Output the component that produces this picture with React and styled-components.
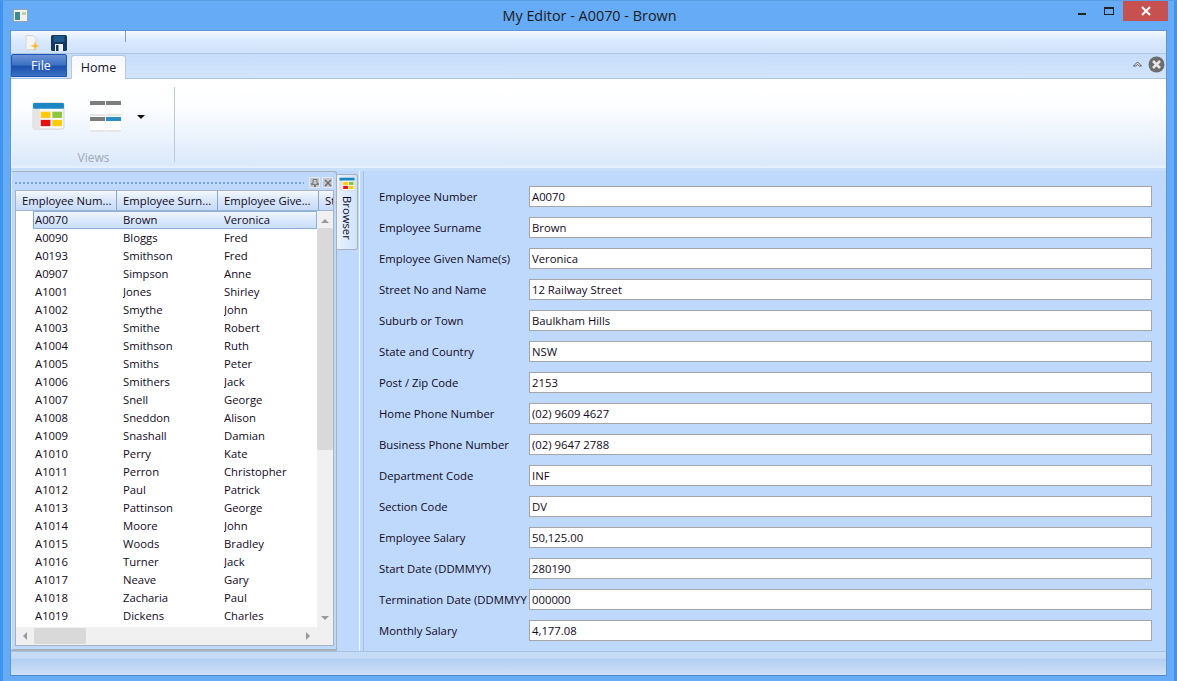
import React from 'react';
import styled, { createGlobalStyle } from 'styled-components';

const Global = createGlobalStyle`
  html, body { margin: 0; padding: 0; width: 1177px; height: 681px; overflow: hidden; background: #66abf6; }
  * { box-sizing: border-box; }
`;
const Frame = styled.div`
  width: 1177px; height: 681px; display: flex; flex-direction: column;
  background: #66abf6; border-left: 3px solid #3f94f0; border-right: 3px solid #3f94f0; border-top: 1px solid #5a9fe6;
  font-family: "Open Sans", "Noto Sans", sans-serif; font-size: 11.3px; color: #12091c;
`;
const TitleBar = styled.div`
  height: 29px; flex: none; display: flex; align-items: center; justify-content: space-between; position: relative; padding-left: 10px;
`;
const Title = styled.div`
  position: absolute; left: 0; right: 0; top: 6px; text-align: center; font-size: 14.4px; line-height: 18px; color: #1b1b1b; padding-left: 2px;
`;
const WinIcon = styled.svg`width: 15px; height: 13px; display: block; margin-top: -1px;`;
const WinButtons = styled.div`display: flex; align-items: flex-start; align-self: flex-start; position: relative; margin-right: 6px;`;
const WinBtn = styled.div`
  width: ${p => p.$w}px; height: 20px; display: flex; align-items: center; justify-content: center;
  background: ${p => p.$close ? '#c75050' : 'transparent'};
`;
const Client = styled.div`
  margin: 0 7px 0 7px; height: 646px; flex: none; border: 1px solid #5f97d6; border-bottom-color: #4f88c8;
  display: flex; flex-direction: column; background: #bed9fb;
`;
const Qat = styled.div`
  height: 23px; flex: none; display: flex; align-items: flex-start; padding-left: 13px; gap: 11px;
  background: linear-gradient(#f5f9ff, #d9e9fd 45%, #cfe2fb);
  border-bottom: 1px solid #aec6e2; position: relative;
`;
const QatIcon = styled.svg`width: 16px; height: 16px; margin-top: 4px; display: block;`;
const QatEnd = styled.div`position: absolute; left: 114px; top: 0; width: 1px; height: 11px; background: #8e9aa8;`;
const TabRow = styled.div`
  height: 25px; flex: none; display: flex; align-items: flex-end; position: relative;
  background: linear-gradient(#c6ddfb, #d3e5fc);
  border-bottom: 1px solid #a9c3e2;
`;
const FileTab = styled.div`
  width: 56px; height: 23px; align-self: flex-start; padding-left: 4px; border: 1px solid #1d57b1; border-radius: 2px 2px 0 0;
  background: linear-gradient(#6b93d6, #3f72c4 45%, #1c52ac 55%, #3b6fc5);
  color: #fff; text-align: center; line-height: 22px; font-size: 12.5px;
`;
const HomeTab = styled.div`
  width: 55px; height: 24px; margin-left: 4px; margin-bottom: -1px; background: linear-gradient(#f4f8fe, #fff); border: 1px solid #b3c9e4; border-bottom: none; border-radius: 3px 3px 0 0;
  text-align: center; line-height: 24px; font-size: 12.5px; color: #1a0f26;
`;
const TabTools = styled.div`
  position: absolute; right: 1px; top: 2px; display: flex; align-items: center; gap: 5px;
`;
const Chevron = styled.svg`width: 11px; height: 8px; display: block; margin-top: -2px;`;
const Ribbon = styled.div`
  height: 89px; flex: none; display: flex; background: linear-gradient(#fff, #fdfeff 30%, #dbe9fb 96%, #e9f2fe);
  border-left: 1px solid #eaf3ff;
`;
const Group = styled.div`
  width: 163px; margin-top: 8px; margin-bottom: 6px; border-right: 1px solid #b9cbe0; display: flex; flex-direction: column; align-items: center;
`;
const GroupIcons = styled.div`
  display: flex; align-items: flex-start; width: 100%; padding: 15px 0 0 20px; flex: 1;
`;
const BigIcon = styled.svg`width: 33px; height: 28px; display: block;`;
const SmallGrid = styled.svg`width: 32px; height: 31px; display: block; margin: -1px 0 0 25px;`;
const Drop = styled.div`
  width: 0; height: 0; border: 4px solid transparent; border-top: 4px solid #111; border-bottom: none; margin: 13px 0 0 15px;
`;
const GroupLabel = styled.div`color: #a2a9b3; font-size: 12px; line-height: 14px; height: 15px; margin: 0 0 -4px 1px;`;
const Strip = styled.div`height: 3px; flex: none; background: #c8dffb;`;
const Main = styled.div`flex: 1; min-height: 0; display: flex; background: #bed9fb;`;
const Pane = styled.div`
  width: 326px; flex: none; height: 480px; border: 1px solid #a8b0ba; border-radius: 3px 3px 0 0; border-bottom-width: 2px; padding: 0 2px 3px 3px; display: flex; flex-direction: column;
  background: #bed9fb; border-left: 1px solid #e4eefb;
`;
const PaneHead = styled.div`height: 18px; flex: none; display: flex; align-items: center; gap: 2px; padding: 3px 1px 0 0;`;
const Grip = styled.div`
  flex: 1; height: 2px; margin: 0 3px 0 0; background-image: repeating-linear-gradient(90deg, #7aa3dc 0 2px, transparent 2px 4px);
`;
const PaneBtn = styled.div`
  width: 11px; height: 11px; border: 1px solid #e2e8f0; background: #c3c7cc; display: flex; align-items: center; justify-content: center;
`;
const DataGrid = styled.div`
  flex: 1; min-height: 0; background: #fff; border: 1px solid #aab2bd; display: flex; flex-direction: column; position: relative;
`;
const HeaderRow = styled.div`
  height: 20px; flex: none; display: flex; overflow: hidden; background: linear-gradient(#f4f8fe, #d8e6f8 50%, #c6dafa); border-bottom: 1px solid #9fb5cf;
`;
const HeaderCell = styled.div`
  flex: none; width: ${p => p.$w}px; padding-left: 6px; line-height: 19px; white-space: nowrap; overflow: hidden; border-right: 1px solid #8ca5c4;
  ${p => p.$last && 'border-right: none;'}
`;
const GridMid = styled.div`flex: 1; min-height: 0; display: flex;`;
const Rows = styled.div`flex: 1; min-width: 0; overflow: hidden;`;
const Row = styled.div`
  height: 18px; display: flex; margin-left: 17px; line-height: 17px;
  ${p => p.$sel && `line-height: 15px; background: linear-gradient(#eef5fe, #dbe9fc 50%, #c9ddfa); border: 1px solid #8fb0da; border-left-color:#7d9fcc; border-radius: 1px;`}
`;
const Cell = styled.div`
  flex: none; width: ${p => p.$w}px; padding-left: ${p => p.$p || 0}px; white-space: nowrap; overflow: hidden;
`;
const VScroll = styled.div`
  width: 16px; flex: none; background: #f0f0f0; display: flex; flex-direction: column; align-items: center; justify-content: space-between;
`;
const VThumb = styled.div`width: 16px; height: 222px; background: #d9d9d9; border-radius: 2px; margin-top: 17px;`;
const ArrowBox = styled.div`width: 16px; height: 17px; display: flex; align-items: center; justify-content: center; position: absolute; ${p => p.$top ? 'top: 21px;' : 'bottom: 19px;'} right: 0;`;
const TriUp = styled.div`width: 0; height: 0; border-left: 4px solid transparent; border-right: 4px solid transparent; border-bottom: 4px solid #9a9a9a;`;
const TriDown = styled.div`width: 0; height: 0; border-left: 4px solid transparent; border-right: 4px solid transparent; border-top: 4px solid #9a9a9a;`;
const HScroll = styled.div`
  height: 18px; flex: none; background: #f0f0f0; display: flex; align-items: center; position: relative;
`;
const HArrow = styled.div`width: 17px; display: flex; justify-content: center; flex: none;`;
const TriLeft = styled.div`width: 0; height: 0; border-top: 4px solid transparent; border-bottom: 4px solid transparent; border-right: 4px solid #9a9a9a;`;
const TriRight = styled.div`width: 0; height: 0; border-top: 4px solid transparent; border-bottom: 4px solid transparent; border-left: 4px solid #9a9a9a;`;
const HThumb = styled.div`width: 52px; height: 16px; background: #d9d9d9; border-radius: 2px; margin-left: 1px;`;
const HTrack = styled.div`flex: 1; display: flex; align-items: center;`;
const Corner = styled.div`width: 17px; flex: none; height: 18px; background: #f0f0f0;`;
const SideTabs = styled.div`width: 21px; flex: none; padding-top: 3px;`;
const SideTab = styled.div`
  width: 21px; height: 76px; background: linear-gradient(90deg, #eaf3fe, #cfe2fb); border: 1px solid #a8b0ba; border-left: none; border-radius: 0 3px 3px 0; display: flex; flex-direction: column; align-items: center; padding-top: 2px;
`;
const SideIcon = styled.svg`width: 16px; height: 14px; display: block;`;
const SideLabel = styled.div`writing-mode: vertical-rl; font-size: 11.3px; line-height: 16px; margin-top: 5px;`;
const Splitter = styled.div`
  width: 5px; flex: none; margin-left: 1px; border-left: 1px solid #f5f9ff; border-right: 1px solid #a6c1e4;
`;
const Form = styled.div`
  flex: 1; display: flex; flex-direction: column; padding: 15px 14px 0 15px; gap: 10px;
`;
const FormRow = styled.div`display: flex; align-items: center; height: 21px;`;
const Label = styled.div`width: 150px; flex: none; white-space: nowrap; overflow: visible;`;
const Value = styled.div`
  flex: 1; height: 21px; background: #fff; border: 1px solid #a5a5a5; line-height: 19px; padding-left: 2px;
`;
const Status = styled.div`
  height: 24px; flex: none; background: linear-gradient(#c6dcf6 0, #c6dcf6 25%, #b4cff1 32%, #cee0f8);
  border-top: 1px solid #a9c3e2;
`;

const fields = [
  ['Employee Number', 'A0070'], ['Employee Surname', 'Brown'], ['Employee Given Name(s)', 'Veronica'],
  ['Street No and Name', '12 Railway Street'], ['Suburb or Town', 'Baulkham Hills'], ['State and Country', 'NSW'],
  ['Post / Zip Code', '2153'], ['Home Phone Number', '(02) 9609 4627'], ['Business Phone Number', '(02) 9647 2788'],
  ['Department Code', 'INF'], ['Section Code', 'DV'], ['Employee Salary', '50,125.00'],
  ['Start Date (DDMMYY)', '280190'], ['Termination Date (DDMMYY', '000000'], ['Monthly Salary', '4,177.08'],
];
const rows = [
  ['A0070','Brown','Veronica'],['A0090','Bloggs','Fred'],['A0193','Smithson','Fred'],['A0907','Simpson','Anne'],
  ['A1001','Jones','Shirley'],['A1002','Smythe','John'],['A1003','Smithe','Robert'],['A1004','Smithson','Ruth'],
  ['A1005','Smiths','Peter'],['A1006','Smithers','Jack'],['A1007','Snell','George'],['A1008','Sneddon','Alison'],
  ['A1009','Snashall','Damian'],['A1010','Perry','Kate'],['A1011','Perron','Christopher'],['A1012','Paul','Patrick'],
  ['A1013','Pattinson','George'],['A1014','Moore','John'],['A1015','Woods','Bradley'],['A1016','Turner','Jack'],
  ['A1017','Neave','Gary'],['A1018','Zacharia','Paul'],['A1019','Dickens','Charles'],
];

const Dashboard = () => (
  <>
    <rect x="1" y="1" width="32" height="27" rx="2" fill="#fafafa" stroke="#cfcfcf" />
    <rect x="1" y="6" width="7" height="22" fill="#e4e4e4" />
    <rect x="1" y="1" width="32" height="6" rx="1" fill="#1b86c4" />
    <rect x="9" y="10" width="10" height="6.5" fill="#ffc90e" />
    <rect x="21" y="10" width="10" height="6.5" fill="#8cc63f" />
    <rect x="9" y="18.5" width="10" height="6.5" fill="#e8100f" />
    <rect x="21" y="18.5" width="10" height="6.5" fill="#ffc90e" />
  </>
);

const MiniPanel = ({ x, y, c }) => (
  <>
    <rect x={x} y={y} width="15" height="15" fill="#fdfdfd" />
    <rect x={x} y={y + 13} width="15" height="2" fill="#e6e6e6" />
    <rect x={x} y={y} width="15" height="4" fill={c} />
  </>
);

export default function App() {
  return (
    <Frame>
      <Global />
      <TitleBar>
        <WinIcon viewBox="0 0 15 13">
          <rect x="0.5" y="0.5" width="14" height="12" fill="#eef1f0" stroke="#9aa4ad" />
          <rect x="2" y="3" width="5" height="8" fill="#3d8a86" />
          <rect x="9" y="3" width="4" height="3" fill="#b8d4a8" />
        </WinIcon>
        <Title>My Editor - A0070 - Brown</Title>
        <WinButtons>
          <WinBtn $w={27}>
            <svg width="9" height="9" viewBox="0 0 9 9"><rect x="0" y="6" width="8" height="2" fill="#222" /></svg>
          </WinBtn>
          <WinBtn $w={27}>
            <svg width="11" height="9" viewBox="0 0 11 9"><rect x="0.5" y="0.5" width="9" height="7" fill="none" stroke="#222" /><rect x="0" y="0" width="10" height="2" fill="#222" /></svg>
          </WinBtn>
          <WinBtn $w={45} $close>
            <svg width="10" height="10" viewBox="0 0 10 10"><path d="M1 1 L9 9 M9 1 L1 9" stroke="#fff" strokeWidth="2" /></svg>
          </WinBtn>
        </WinButtons>
      </TitleBar>
      <Client>
        <Qat>
          <QatIcon viewBox="0 0 16 16">
            <path d="M2 0.5 H9 L12 3.5 V14.5 H2 Z" fill="#f4f4f4" stroke="#d6d6d6" />
            <path d="M11 6 L12 10 L16 11 L12 12 L11 16 L10 12 L6 11 L10 10 Z" fill="#fdb92d" />
          </QatIcon>
          <QatIcon viewBox="0 0 16 16">
            <rect x="0" y="0" width="16" height="16" rx="1.5" fill="#12385f" />
            <rect x="2.5" y="1" width="11" height="6" fill="#1f5a8e" />
            <rect x="4" y="9" width="8" height="7" fill="#eef2f6" />
            <rect x="5" y="10" width="2.5" height="6" fill="#12385f" />
          </QatIcon>
          <QatEnd />
        </Qat>
        <TabRow>
          <FileTab>File</FileTab>
          <HomeTab>Home</HomeTab>
          <TabTools>
            <Chevron viewBox="0 0 11 8"><path d="M1.5 6 L5.5 2 L9.5 6 L7.5 6 L5.5 4.5 L3.5 6 Z" fill="#fff" stroke="#444" strokeWidth="0.9" /></Chevron>
            <svg width="17" height="17" viewBox="0 0 17 17"><circle cx="8.5" cy="8.5" r="8" fill="#6d6d6d" /><path d="M5 5 L12 12 M12 5 L5 12" stroke="#e8e8e8" strokeWidth="2.6" /></svg>
          </TabTools>
        </TabRow>
        <Ribbon>
          <Group>
            <GroupIcons>
              <BigIcon viewBox="0 0 34 29"><Dashboard /></BigIcon>
              <SmallGrid viewBox="0 0 32 31">
                <MiniPanel x={0} y={0} c="#7d7d7d" />
                <MiniPanel x={16} y={0} c="#7d7d7d" />
                <MiniPanel x={0} y={16} c="#7d7d7d" />
                <MiniPanel x={16} y={16} c="#2a8ec6" />
              </SmallGrid>
              <Drop />
            </GroupIcons>
            <GroupLabel>Views</GroupLabel>
          </Group>
        </Ribbon>
        <Strip />
        <Main>
          <Pane>
            <PaneHead>
              <Grip />
              <PaneBtn>
                <svg width="8" height="8" viewBox="0 0 8 8"><path d="M2 0.5 H6 V4.5 H7.5 V5.5 H4.5 V8 H3.5 V5.5 H0.5 V4.5 H2 Z" fill="none" stroke="#666" strokeWidth="0.8" /></svg>
              </PaneBtn>
              <PaneBtn>
                <svg width="8" height="8" viewBox="0 0 8 8"><path d="M1 1 L7 7 M7 1 L1 7" stroke="#666" strokeWidth="1.3" /></svg>
              </PaneBtn>
            </PaneHead>
            <DataGrid>
              <HeaderRow>
                <HeaderCell $w={101}>Employee Num...</HeaderCell>
                <HeaderCell $w={101}>Employee Surn...</HeaderCell>
                <HeaderCell $w={101}>Employee Give...</HeaderCell>
                <HeaderCell $w={16} $last>St</HeaderCell>
              </HeaderRow>
              <GridMid>
                <Rows>
                  {rows.map((r, i) => (
                    <Row key={r[0]} $sel={i === 0}>
                      <Cell $w={i === 0 ? 89 : 90} $p={i === 0 ? 1 : 2}>{r[0]}</Cell>
                      <Cell $w={101}>{r[1]}</Cell>
                      <Cell $w={100}>{r[2]}</Cell>
                    </Row>
                  ))}
                </Rows>
                <VScroll>
                  <VThumb />
                </VScroll>
                <ArrowBox $top><TriUp /></ArrowBox>
                <ArrowBox><TriDown /></ArrowBox>
              </GridMid>
              <HScroll>
                <HArrow><TriLeft /></HArrow>
                <HTrack><HThumb /></HTrack>
                <HArrow><TriRight /></HArrow>
                <Corner />
              </HScroll>
            </DataGrid>
          </Pane>
          <SideTabs>
            <SideTab>
              <SideIcon viewBox="0 0 34 29"><Dashboard /></SideIcon>
              <SideLabel>Browser</SideLabel>
            </SideTab>
          </SideTabs>
          <Splitter />
          <Form>
            {fields.map(([l, v]) => (
              <FormRow key={l}>
                <Label>{l}</Label>
                <Value>{v}</Value>
              </FormRow>
            ))}
          </Form>
        </Main>
        <Status />
      </Client>
    </Frame>
  );
}
